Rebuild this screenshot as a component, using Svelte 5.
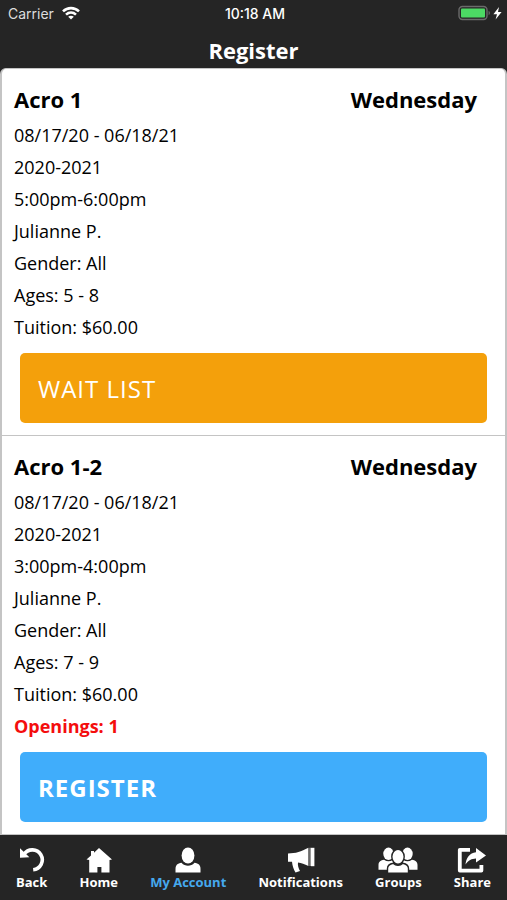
<script>
	const classes = [
		{
			name: 'Acro 1',
			day: 'Wednesday',
			details: [
				'08/17/20 - 06/18/21',
				'2020-2021',
				'5:00pm-6:00pm',
				'Julianne P.',
				'Gender: All',
				'Ages: 5 - 8',
				'Tuition: $60.00'
			],
			openings: 0
		},
		{
			name: 'Acro 1-2',
			day: 'Wednesday',
			details: [
				'08/17/20 - 06/18/21',
				'2020-2021',
				'3:00pm-4:00pm',
				'Julianne P.',
				'Gender: All',
				'Ages: 7 - 9',
				'Tuition: $60.00'
			],
			openings: 1
		}
	];

	const tabs = [
		{ id: 'back', label: 'Back' },
		{ id: 'home', label: 'Home' },
		{ id: 'account', label: 'My Account' },
		{ id: 'notifications', label: 'Notifications' },
		{ id: 'groups', label: 'Groups' },
		{ id: 'share', label: 'Share' }
	];

	let active = $state('account');
</script>

{#snippet icon(id)}
	{#if id === 'back'}
		<svg width="26" height="26" viewBox="0 0 26 26">
			<path d="M5 7.2 A10 10 0 1 1 14.2 22.8" fill="none" stroke="#fff" stroke-width="3.6" />
			<path d="M1 1.2 L1 10.7 L10.4 10.2 Z" fill="#fff" />
		</svg>
	{:else if id === 'home'}
		<svg width="26" height="26" viewBox="0 0 26 26">
			<path
				d="M13 1 L26 12.5 L23.5 13 V25.5 H15.4 V20 H11.4 V25.5 H3.2 V13 L0.5 12.5 L5 8.5 V4 H8 V5.7 Z"
				fill="#fff"
			/>
		</svg>
	{:else if id === 'account'}
		<svg width="26" height="26" viewBox="0 0 26 26">
			<ellipse cx="13" cy="8.5" rx="6.4" ry="8" fill="#fff" />
			<path
				d="M0.5 25.5 V22 C0.5 18 2.5 16.4 6.5 15.8 C8.4 18 10.6 18.8 13 18.8 C15.4 18.8 17.6 18 19.5 15.8 C23.5 16.4 25.5 18 25.5 22 V25.5 Z"
				fill="#fff"
			/>
		</svg>
	{:else if id === 'notifications'}
		<svg width="28" height="26" viewBox="0 0 28 26">
			<path
				d="M1 6.5 C9 6.5 14 4.5 21.4 0.8 V19 C17.5 17.2 14.5 16 11 15.4 C10.5 18 11.5 21.5 13 24 L8.5 25.5 C6.5 22.5 5.3 18.5 5 14.8 H1 Z"
				fill="#fff"
			/>
			<path d="M22.4 0.8 H24 V19 H22.4 Z" fill="#999" />
			<path d="M24 0.8 H27.4 V19.2 H24 Z" fill="#fff" />
		</svg>
	{:else if id === 'groups'}
		<svg width="40" height="26" viewBox="0 0 40 26">
			<g fill="#fff">
				<ellipse cx="10.5" cy="6.8" rx="5.2" ry="6.2" />
				<ellipse cx="29.5" cy="6.8" rx="5.2" ry="6.2" />
				<path d="M0.5 22.8 V18 C0.5 14.5 3 13.3 6 12.8 C9 14.8 12 14.8 15 12.8 V22.8 Z" />
				<path d="M39.5 22.8 V18 C39.5 14.5 37 13.3 34 12.8 C31 14.8 28 14.8 25 12.8 V22.8 Z" />
			</g>
			<g fill="#fff" stroke="#252525" stroke-width="1.4">
				<path
					d="M9.5 26.2 V21.5 C9.5 18 12 16.8 15.2 16.2 C18 19 22 19 24.8 16.2 C28 16.8 30.5 18 30.5 21.5 V26.2 Z"
				/>
				<ellipse cx="20" cy="9.8" rx="6.2" ry="7.4" />
			</g>
		</svg>
	{:else}
		<svg width="30" height="26" viewBox="0 0 30 26">
			<path
				d="M13 2.8 H2.8 V23.6 H24.4 V18"
				fill="none"
				stroke="#fff"
				stroke-width="3.8"
				stroke-linejoin="round"
			/>
			<path
				d="M19 1 L29 8.5 L19 15.6 V11.4 C14.5 11.6 11.5 13 8.5 17.5 C9 11 12.5 5.8 19 5.2 Z"
				fill="#fff"
			/>
		</svg>
	{/if}
{/snippet}

<div class="app">
	<header>
		<div class="status">
			<div class="carrier">
				<span>Carrier</span>
				<svg width="18" height="14" viewBox="0 0 18 14" aria-hidden="true">
					<g fill="none" stroke="#fff" stroke-width="2.6">
						<path d="M1 5.4 C5.6 1 12.4 1 17 5.4" />
						<path d="M4 8.6 C7 5.9 11 5.9 14 8.6" />
					</g>
					<path d="M6.2 10.8 C7.8 9.4 10.2 9.4 11.8 10.8 L9 13.6 Z" fill="#fff" />
				</svg>
			</div>
			<span class="time">10:18 AM</span>
			<svg class="battery" width="44" height="16" viewBox="0 0 44 16" aria-hidden="true">
				<rect x="1" y="1.5" width="28" height="13" rx="3.5" fill="none" stroke="#6a6a6a" stroke-width="1.4" />
				<rect x="3" y="3.5" width="24" height="9" rx="1" fill="#4cd964" />
				<path d="M30.6 5.8 C32.4 6.5 32.4 9.5 30.6 10.2 Z" fill="#6a6a6a" />
				<path d="M41 2 L35.4 9.2 H39 L37.6 14.4 L43.6 7 H40 Z" fill="#fff" />
			</svg>
		</div>
		<h1>Register</h1>
	</header>

	<main>
		{#each classes as item}
			<article>
				<div class="heading">
					<h2>{item.name}</h2>
					<h2>{item.day}</h2>
				</div>
				{#each item.details as line}
					<p>{line}</p>
				{/each}
				{#if item.openings > 0}
					<p class="openings">Openings: {item.openings}</p>
					<button class="action register">REGISTER</button>
				{:else}
					<button class="action">WAIT LIST</button>
				{/if}
			</article>
		{/each}
	</main>

	<nav>
		{#each tabs as tab}
			<button class="tab" class:active={active === tab.id} onclick={() => (active = tab.id)}>
				{@render icon(tab.id)}
				<span>{tab.label}</span>
			</button>
		{/each}
	</nav>
</div>

<style>
	:global(body) {
		margin: 0;
		background: #252525;
	}

	.app {
		display: flex;
		flex-direction: column;
		min-height: 100vh;
		background: #252525;
		font-family: 'Open Sans', sans-serif;
		color: #000;
	}

	header {
		color: #fff;
	}

	.status {
		display: grid;
		grid-template-columns: 1fr auto 1fr;
		align-items: center;
		height: 26px;
		padding: 0 5px 0 8px;
		font-family: Inter, sans-serif;
		font-size: 14px;
	}

	.carrier {
		display: flex;
		align-items: center;
		gap: 8px;
		color: #ddd;
	}

	.time {
		font-weight: 500;
	}

	.battery {
		justify-self: end;
	}

	h1 {
		margin: 0;
		padding: 8px 0 2px;
		font-size: 22px;
		line-height: 32px;
		text-align: center;
	}

	main {
		background: #fff;
		border: 2px solid #c4c4c4;
		border-width: 1px 2px;
		border-radius: 6px 6px 0 0;
	}

	article {
		padding: 12px;

		& + article {
			border-top: 1px solid #c4c4c4;
		}
	}

	.heading {
		display: flex;
		justify-content: space-between;
		padding-right: 16px;
		margin-bottom: 2px;
	}

	h2 {
		margin: 0;
		font-size: 22px;
		line-height: 36px;
	}

	p {
		margin: 0;
		font-size: 18px;
		line-height: 32px;
	}

	.openings {
		font-weight: bold;
		color: #f40d0d;
	}

	.action {
		display: block;
		width: calc(100% - 12px);
		height: 70px;
		margin: 10px 6px 0;
		padding: 0 18px;
		border: 0;
		border-radius: 5px;
		background: #f4a00b;
		color: #fff;
		font: inherit;
		font-size: 24px;
		letter-spacing: 1px;
		text-align: left;
		cursor: pointer;
	}

	.register {
		background: #40adfb;
		font-weight: bold;
	}

	nav {
		display: flex;
		flex: 1;
		justify-content: space-between;
		align-items: flex-start;
		padding: 12px 16px 8px;
	}

	.tab {
		display: flex;
		flex-direction: column;
		align-items: center;
		padding: 0;
		border: 0;
		background: none;
		color: #fff;
		font: inherit;
		font-size: 13px;
		font-weight: bold;
		line-height: 18px;
		cursor: pointer;

		&.active {
			color: #45a9ee;
		}
	}
</style>
